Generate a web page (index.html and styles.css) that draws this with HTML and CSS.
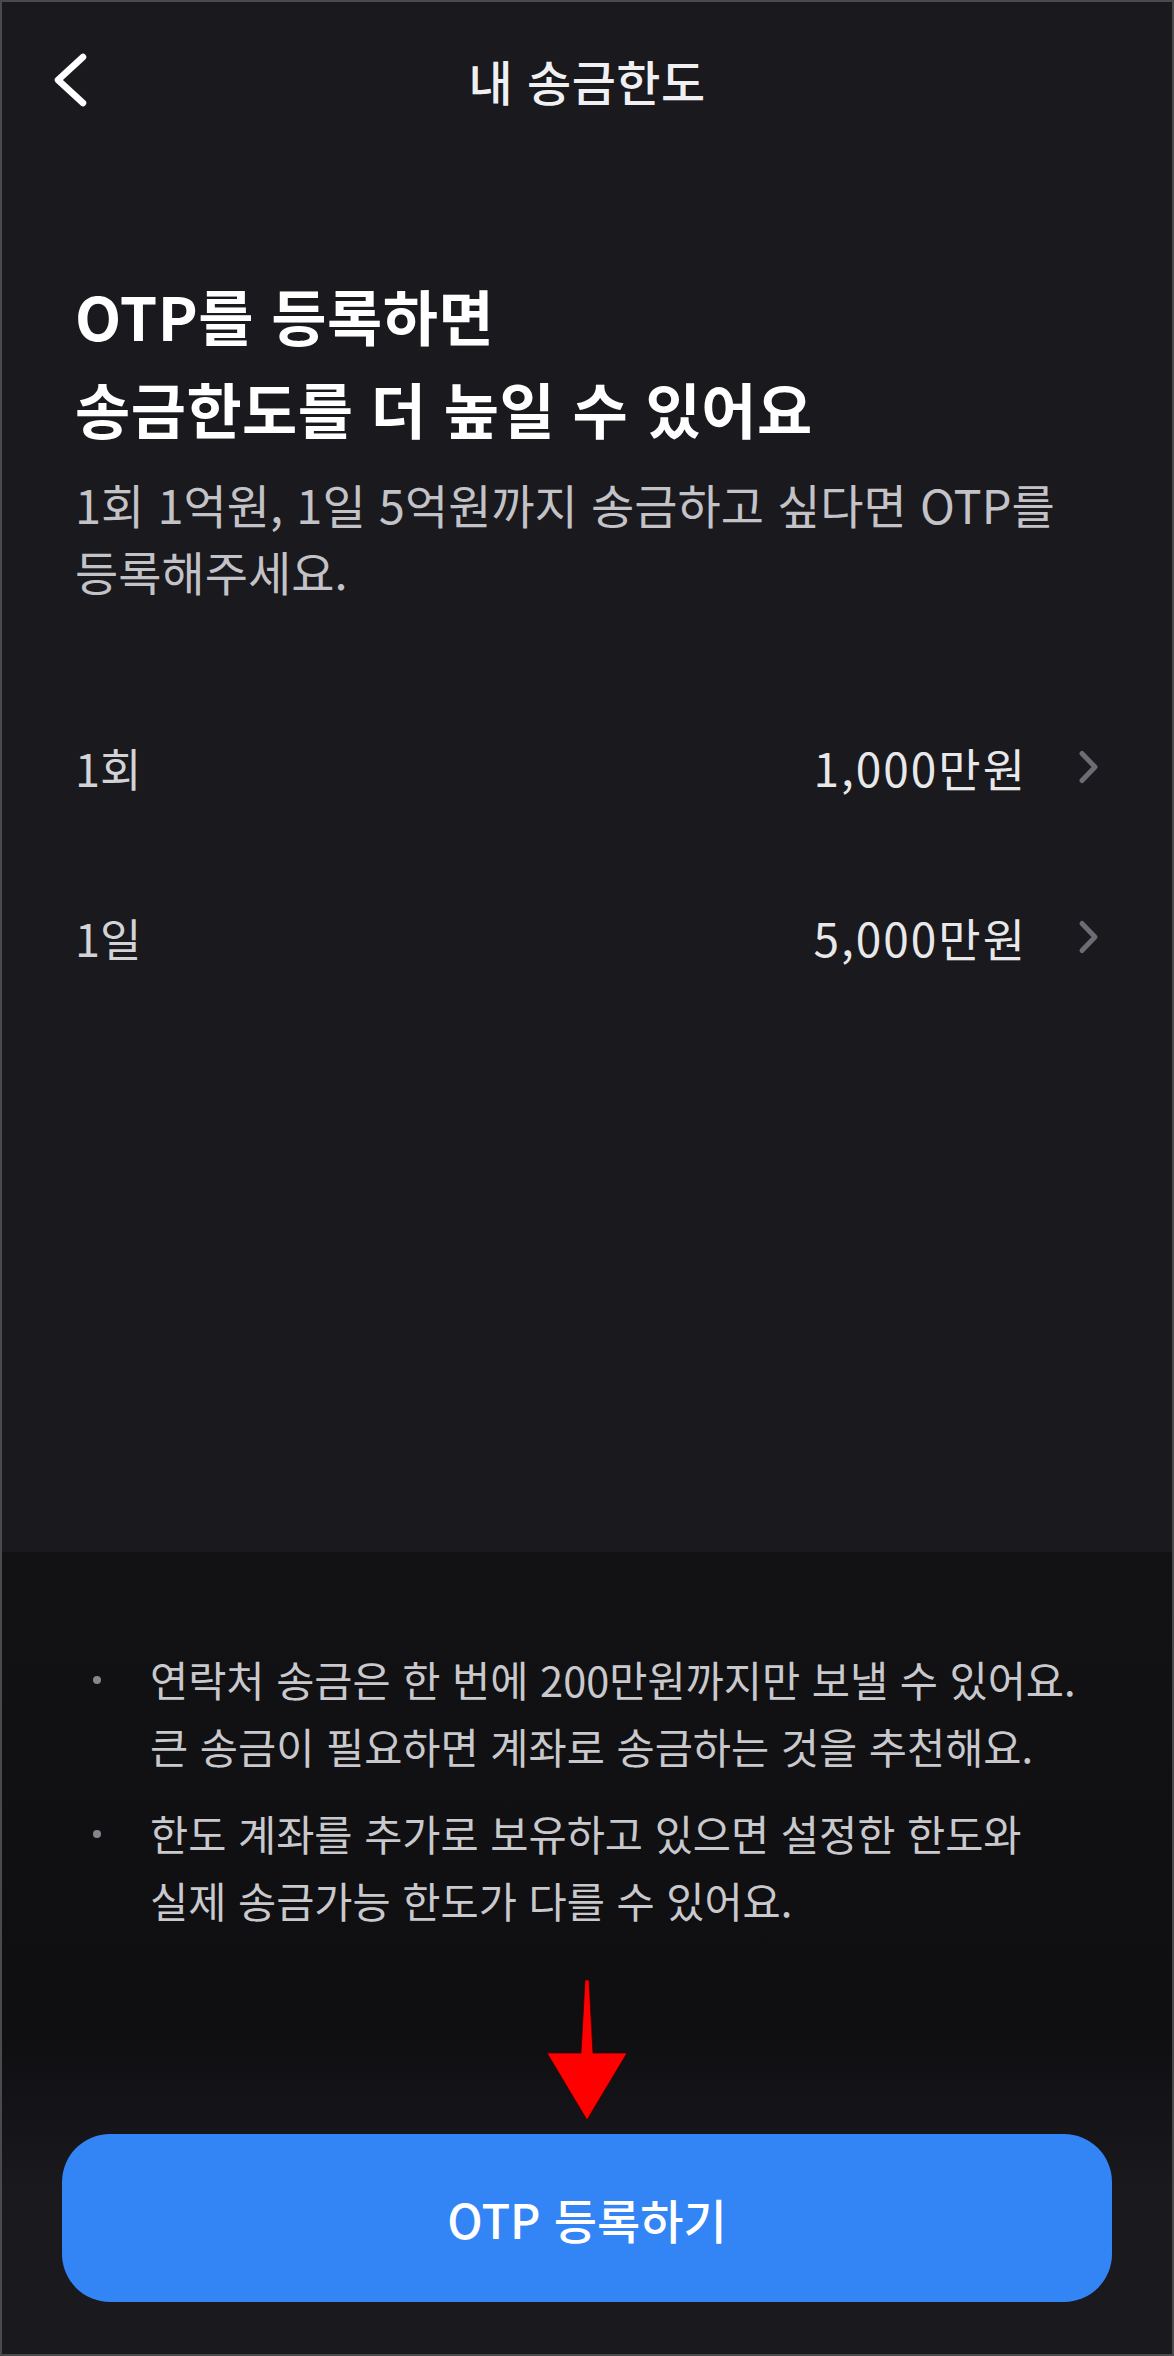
FILE: index.html
```html
<!DOCTYPE html>
<html lang="ko">
<head>
<meta charset="utf-8">
<title>내 송금한도</title>
<link rel="stylesheet" href="styles.css">
</head>
<body>
<div class="screen">
  <header class="topbar">
    <div class="topbar-left">
      <svg class="back" width="56" height="60" viewBox="0 0 56 60" aria-hidden="true">
        <polyline points="39,7 14,30 39,53" fill="none" stroke="#ffffff" stroke-width="6.5" stroke-linecap="round" stroke-linejoin="round"/>
      </svg>
    </div>
    <h1 class="topbar-title">내 송금한도</h1>
    <div class="topbar-right"></div>
  </header>

  <main class="content">
    <h2 class="headline">OTP를 등록하면<br>송금한도를 더 높일 수 있어요</h2>
    <p class="desc">1회 1억원, 1일 5억원까지 송금하고 싶다면 OTP를<br>등록해주세요.</p>

    <ul class="limits">
      <li class="limit-row">
        <span class="limit-label">1회</span>
        <span class="limit-value">1,000만원</span>
        <svg class="chev" width="28" height="40" viewBox="0 0 28 40" aria-hidden="true">
          <polyline points="11,6.5 24,20 11,33.5" fill="none" stroke="#6c6c75" stroke-width="5" stroke-linecap="round" stroke-linejoin="round"/>
        </svg>
      </li>
      <li class="limit-row">
        <span class="limit-label">1일</span>
        <span class="limit-value">5,000만원</span>
        <svg class="chev" width="28" height="40" viewBox="0 0 28 40" aria-hidden="true">
          <polyline points="11,6.5 24,20 11,33.5" fill="none" stroke="#6c6c75" stroke-width="5" stroke-linecap="round" stroke-linejoin="round"/>
        </svg>
      </li>
    </ul>
  </main>

  <section class="notice">
    <ul class="notes">
      <li class="note"><span class="dot"></span><span class="note-text">연락처 송금은 한 번에 200만원까지만 보낼 수 있어요.<br>큰 송금이 필요하면 계좌로 송금하는 것을 추천해요.</span></li>
      <li class="note"><span class="dot"></span><span class="note-text">한도 계좌를 추가로 보유하고 있으면 설정한 한도와<br>실제 송금가능 한도가 다를 수 있어요.</span></li>
    </ul>
    <div class="cta">
      <button class="cta-button" type="button">OTP 등록하기</button>
    </div>
  </section>

  <svg class="annot-arrow" width="84" height="144" viewBox="0 0 84 144" aria-hidden="true">
    <polygon points="40,2 44,2 48,75 82,75 42,142 2,75 36,75" fill="#ff0000" stroke="#3a0000" stroke-width="0.8" stroke-linejoin="miter"/>
  </svg>
</div>
</body>
</html>
```

FILE: styles.css
```css
html, body {
  margin: 0;
  padding: 0;
  background: #19191e;
}

body {
  font-family: "Noto Sans CJK KR", "Noto Sans", "Liberation Sans", sans-serif;
  color: #ffffff;
}

.screen {
  position: relative;
  box-sizing: border-box;
  width: 1174px;
  height: 2356px;
  border: 2px solid #4a4a4c;
  background: #19191e;
  display: flex;
  flex-direction: column;
  overflow: hidden;
}

/* top bar */
.topbar {
  height: 156px;
  display: grid;
  grid-template-columns: 1fr auto 1fr;
  align-items: center;
  flex: none;
}

.topbar-left {
  padding-left: 42px;
  display: flex;
  align-items: center;
}

.back {
  display: block;
}

.topbar-title {
  margin: 0;
  font-size: 48px;
  font-weight: 500;
  color: #f0f0f2;
  line-height: 1;
  letter-spacing: 0.5px;
}

/* main */
.content {
  flex: 1;
  padding: 0 73px;
}

.headline {
  margin: 110px 0 0;
  font-size: 60px;
  line-height: 93px;
  font-weight: 700;
  color: #ffffff;
  letter-spacing: 0.5px;
}

.desc {
  margin: 16px 0 0;
  font-size: 47px;
  line-height: 67px;
  font-weight: 400;
  color: #c2c2c7;
}

.limits {
  list-style: none;
  margin: 78px 0 0;
  padding: 0;
}

.limit-row {
  height: 170px;
  display: flex;
  align-items: center;
  font-size: 45px;
}

.limit-label {
  flex: 1;
  color: #d3d3d7;
}

.limit-value {
  color: #e8e8ea;
  font-size: 46px;
  letter-spacing: 2px;
  margin-right: 44px;
}

.chev {
  display: block;
  flex: none;
}

/* bottom notice */
.notice {
  flex: none;
  height: 802px;
  box-sizing: border-box;
  padding-top: 94px;
  display: flex;
  flex-direction: column;
  background: linear-gradient(to bottom, #121215 0px, #0f0f12 480px, #19191e 640px, #19191e 100%);
}

.notes {
  list-style: none;
  margin: 0;
  padding: 0 73px;
  display: flex;
  flex-direction: column;
  gap: 20px;
}

.note {
  display: grid;
  grid-template-columns: 75px 1fr;
  font-size: 41.5px;
  line-height: 67px;
  color: #c9c9cd;
}

.dot {
  width: 8px;
  height: 8px;
  border-radius: 50%;
  background: #85858d;
  margin: 29.5px 0 0 18px;
}

.note-text {
  white-space: nowrap;
}

.cta {
  margin-top: auto;
  padding: 0 60px 52px;
}

.cta-button {
  display: block;
  width: 100%;
  height: 168px;
  border: none;
  border-radius: 48px;
  background: #3384f5;
  color: #ffffff;
  font-family: "Noto Sans CJK KR", "Noto Sans", "Liberation Sans", sans-serif;
  font-size: 47px;
  font-weight: 500;
  padding: 0;
}

/* annotation overlay */
.annot-arrow {
  position: absolute;
  left: 543px;
  top: 1976px;
  display: block;
}
```
